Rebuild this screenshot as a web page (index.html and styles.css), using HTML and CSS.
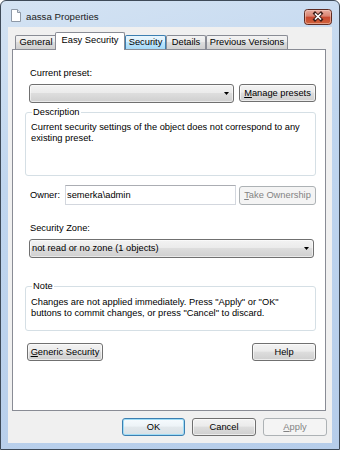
FILE: index.html
```html
<!DOCTYPE html>
<html lang="en">
<head>
    <meta charset="UTF-8">
    <title>aassa Properties</title>
    <link rel="stylesheet" href="styles.css">
</head>
<body>

    <div class="window">

        <!-- Title bar -->
        <div class="titlebar">
            <svg class="app-icon" width="10" height="13" viewBox="0 0 10 13">
                <path d="M0.5 0.5H6.5L9.5 3.5V12.5H0.5Z" fill="#fff" stroke="#8e99a7"/>
                <path d="M6.5 0.5V3.5H9.5" fill="#dfe5ec" stroke="#8e99a7"/>
            </svg>
            <span class="title">aassa Properties</span>
            <svg class="close" width="28" height="16" viewBox="0 0 28 16">
                <defs>
                    <linearGradient id="closeGrad" x1="0" y1="0" x2="0" y2="1">
                        <stop offset="0" stop-color="#eab0a3"/>
                        <stop offset="0.45" stop-color="#d9826f"/>
                        <stop offset="0.5" stop-color="#c8472f"/>
                        <stop offset="1" stop-color="#d0653c"/>
                    </linearGradient>
                </defs>
                <rect x="0.5" y="0.5" width="27" height="15" rx="3" fill="url(#closeGrad)" stroke="#5d2b22"/>
                <rect x="1.5" y="1.5" width="25" height="13" rx="2" fill="none" stroke="#f6cfc4" stroke-opacity="0.55"/>
                <path d="M11 4.5L17 10.5M17 4.5L11 10.5" stroke="#3b1b15" stroke-width="3.4" stroke-linecap="square"/>
                <path d="M11 4.5L17 10.5M17 4.5L11 10.5" stroke="#fff" stroke-width="1.7"/>
            </svg>
        </div>

        <div class="client">

            <!-- Tabs -->
            <div class="tabs">
                <div class="tab tab-general">General</div>
                <div class="tab tab-easy active">Easy Security</div>
                <div class="tab tab-security hover">Security</div>
                <div class="tab tab-details">Details</div>
                <div class="tab tab-versions">Previous Versions</div>
            </div>

            <!-- Easy Security page -->
            <div class="panel">
                <div class="label">Current preset:</div>
                <div class="preset-row">
                    <div class="combo">
                        <span class="combo-text"></span>
                        <svg class="arrow" width="5" height="3" viewBox="0 0 5 3"><path d="M0 0H5L2.5 3Z" fill="#000"/></svg>
                    </div>
                    <button class="btn btn-side"><u>M</u>anage presets</button>
                </div>

                <fieldset class="group desc">
                    <legend>Description</legend>
                    <p>Current security settings of the object does not correspond to any existing preset.</p>
                </fieldset>

                <div class="owner-row">
                    <span class="owner-label">Owner:</span>
                    <input class="field" type="text" value="semerka\admin">
                    <button class="btn btn-side btn-take" disabled><u>T</u>ake Ownership</button>
                </div>

                <div class="label zone-label">Security Zone:</div>
                <div class="combo zone-combo">
                    <span class="combo-text">not read or no zone (1 objects)</span>
                    <svg class="arrow" width="5" height="3" viewBox="0 0 5 3"><path d="M0 0H5L2.5 3Z" fill="#000"/></svg>
                </div>

                <fieldset class="group note">
                    <legend>Note</legend>
                    <p>Changes are not applied immediately. Press "Apply" or "OK" buttons to commit changes, or press "Cancel" to discard.</p>
                </fieldset>

                <div class="page-buttons">
                    <button class="btn btn-generic"><u>G</u>eneric Security</button>
                    <button class="btn btn-help">Help</button>
                </div>
            </div>

            <!-- Dialog buttons -->
            <div class="footer">
                <button class="btn btn-ok default">OK</button>
                <button class="btn btn-cancel">Cancel</button>
                <button class="btn btn-apply" disabled><u>A</u>pply</button>
            </div>
        </div>
    </div>

</body>
</html>
```

FILE: styles.css
```css
* {
    box-sizing: border-box;
}

html, body {
    margin: 0;
    padding: 0;
    background: #fff;
}

body {
    font-family: "Liberation Sans", Arial, sans-serif;
    font-size: 9.3px;
    line-height: 11px;
    color: #000;
}

/* Window frame */
.window {
    width: 340px;
    height: 450px;
    display: flex;
    flex-direction: column;
    padding: 0 7px 6px;
    border: 1px solid #3e4a58;
    border-radius: 6px 6px 0 0;
    background: linear-gradient(165deg, #d4e3f3 0%, #c0d6ef 35%, #b6cdea 100%);
}

.titlebar {
    height: 26px;
    display: flex;
    align-items: flex-start;
    padding-left: 3px;
}

.app-icon {
    margin-top: 8px;
    flex: none;
}

.title {
    margin: 10px 0 0 5px;
    font-size: 9.7px;
    color: #1c1c1c;
}

.close {
    margin: 8px 0 0 auto;
    flex: none;
}

.client {
    height: 416px;
    background: #f0f0f0;
    padding: 5px 6px 0 4px;
}

/* Tabs */
.tabs {
    height: 17px;
    display: flex;
    align-items: flex-end;
    padding-left: 3px;
}

.tab {
    height: 14px;
    padding-top: 1px;
    text-align: center;
    border: 1px solid #898c95;
    border-bottom: none;
    border-radius: 2px 2px 0 0;
    background: linear-gradient(#f3f3f3, #ebebeb 45%, #dddddd 50%, #cfcfcf);
    white-space: nowrap;
}

.tab.hover {
    border-color: #3c7fb1;
    background: linear-gradient(#eaf6fd, #d9f0fc 45%, #bee6fd 50%, #a7d9f5);
}

.tab.active {
    position: relative;
    z-index: 1;
    height: 18px;
    margin: 0 0 -1px -2px;
    padding-top: 2px;
    background: #fff;
}

.tab-general { width: 42px; }
.tab-easy { width: 70px; }
.tab-security { width: 41px; }
.tab-details { width: 40px; }
.tab-versions { width: 82px; }

/* Page */
.panel {
    height: 362px;
    padding: 18px 9px 0 12px;
    border: 1px solid #898c95;
    background: #fff;
}

.label {
    margin-left: 5px;
}

.preset-row {
    display: flex;
    align-items: flex-start;
    gap: 5px;
    margin: 5px 0 0 4px;
    height: 19px;
}

.combo {
    flex: 1;
    height: 19px;
    display: flex;
    align-items: center;
    padding-left: 2px;
    border: 1px solid #707070;
    border-radius: 3px;
    background: linear-gradient(#f3f3f3, #ebebeb 45%, #dddddd 50%, #cfcfcf);
    box-shadow: inset 0 0 0 1px rgba(255, 255, 255, 0.55);
}

.combo .arrow {
    margin: 0 4px 0 auto;
    flex: none;
}

.zone-combo {
    margin: 5px 2px 0 4px;
}

.btn {
    font: inherit;
    color: #000;
    height: 18px;
    padding: 0;
    border: 1px solid #707070;
    border-radius: 3px;
    background: linear-gradient(#f3f3f3, #ebebeb 45%, #dddddd 50%, #cfcfcf);
    box-shadow: inset 0 0 0 1px rgba(255, 255, 255, 0.6);
    white-space: nowrap;
}

.btn:disabled {
    color: #838383;
    border-color: #adb2b5;
    background: #f4f4f4;
    box-shadow: none;
}

.btn.default {
    border-color: #3c7fb1;
    box-shadow: inset 0 0 0 1px #9fdcf6;
    background: linear-gradient(#f6fbfe, #edf3f7 45%, #e2e8ec 50%, #d8e0e5);
}

.btn-side {
    width: 77px;
    flex: none;
}

.group {
    margin: 4px 0 0;
    padding: 4px 5px 0;
    min-width: 0;
    border: 1px solid #d5dfe5;
    border-radius: 3px;
}

.group legend {
    padding: 0 1px;
    margin-left: 1px;
    line-height: 11px;
}

.group p {
    margin: 0;
}

.desc p {
    height: 53px;
}

.owner-row {
    display: flex;
    align-items: flex-start;
    height: 20px;
    margin-top: 9px;
    padding-left: 5px;
}

.owner-label {
    width: 35px;
    flex: none;
    line-height: 20px;
}

.field {
    flex: 1;
    min-width: 0;
    height: 20px;
    margin-right: 3px;
    padding: 0 1px;
    font: inherit;
    color: #000;
    border: 1px solid #d3d7de;
    border-top-color: #abadb3;
    background: #fff;
    outline: none;
}

.btn-take {
    height: 19px;
    margin-top: 1px;
}

.zone-label {
    margin-top: 18px;
}

.note {
    margin-top: 23px;
}

.note p {
    height: 33px;
    margin-top: 1px;
}

.page-buttons {
    display: flex;
    justify-content: space-between;
    margin-top: 12px;
    padding-left: 2px;
}

.btn-generic { width: 76px; }
.btn-help { width: 64px; }

/* Dialog buttons */
.footer {
    display: flex;
    justify-content: flex-end;
    gap: 7px;
    margin: 7px -1px 0 0;
}

.btn-ok { width: 63px; }
.btn-cancel { width: 64px; }
.btn-apply { width: 64px; }
```
